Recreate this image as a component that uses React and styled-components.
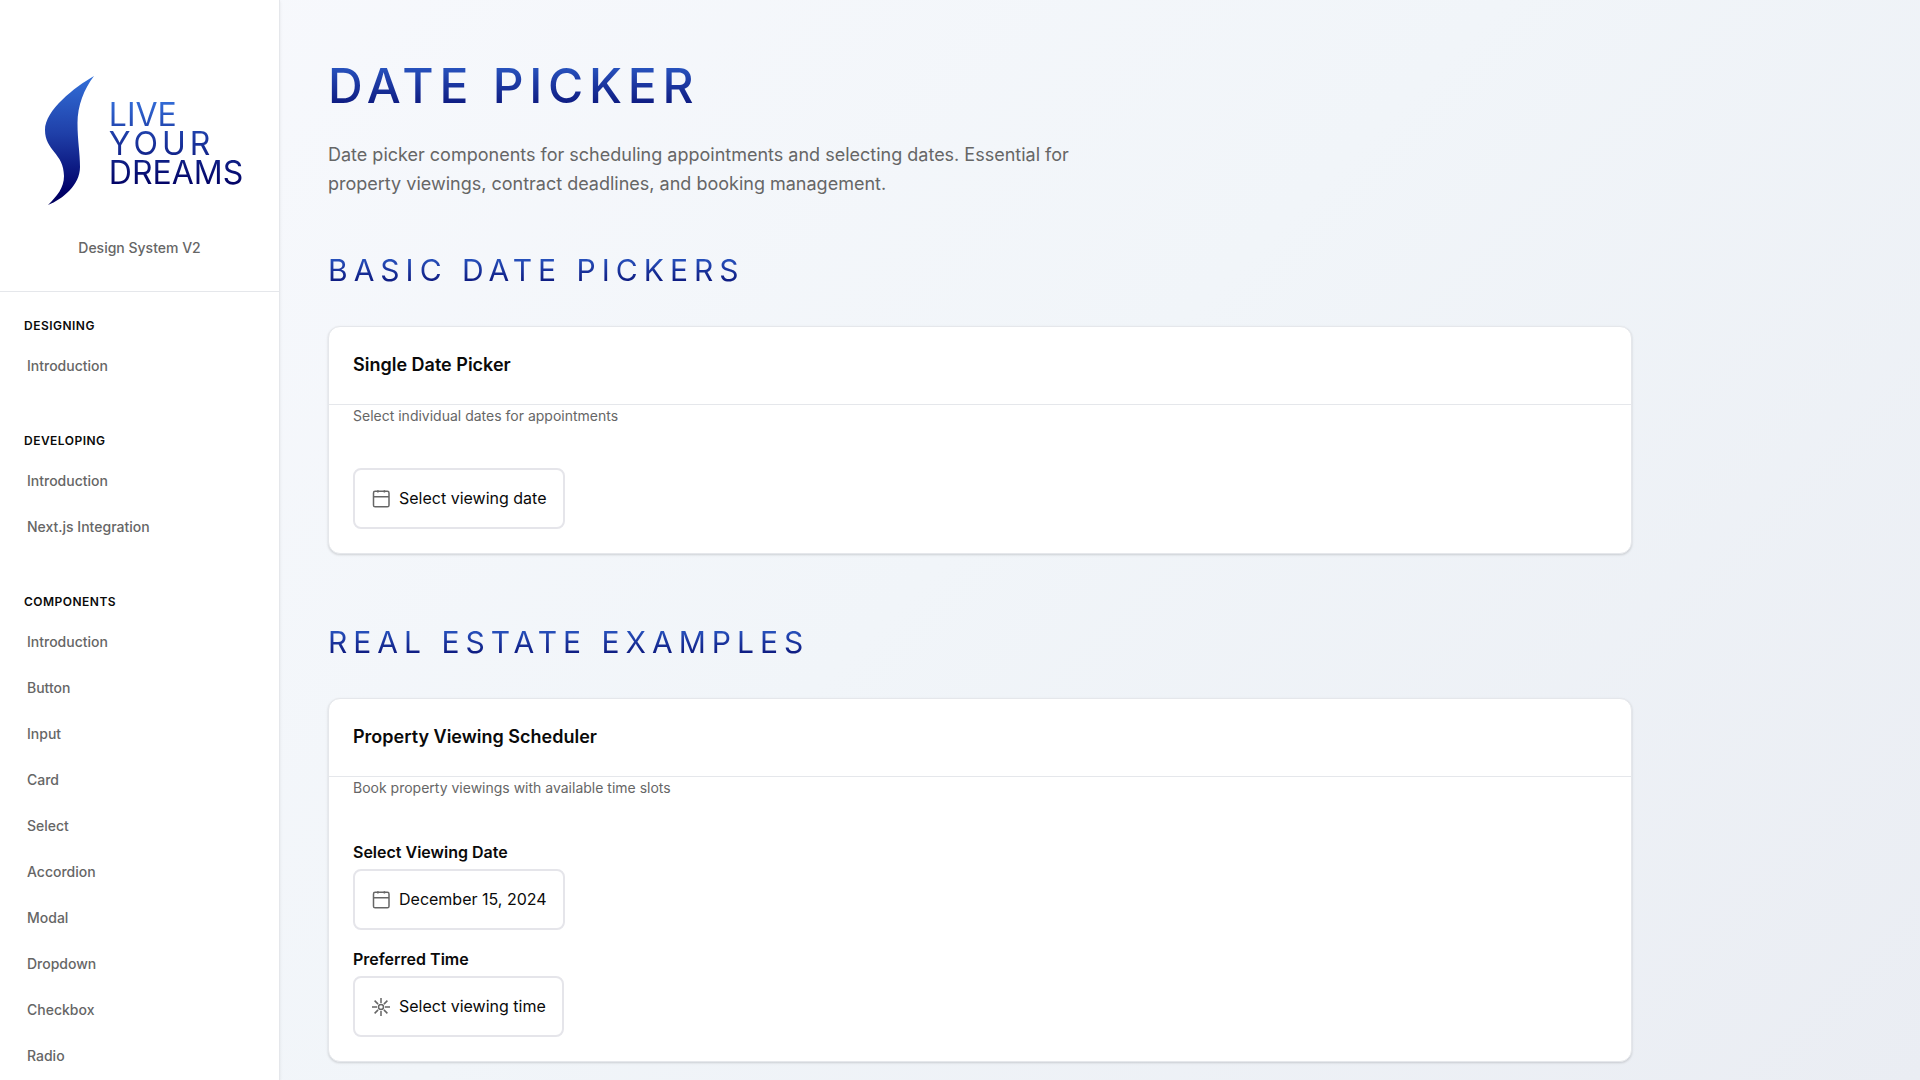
import React from "react";
import styled, { createGlobalStyle } from "styled-components";

const GlobalStyle = createGlobalStyle`
  *, *::before, *::after { box-sizing: border-box; }
  html { height: 100%; overflow: hidden; }
  body {
    margin: 0;
    height: 100%;
    font-family: Inter, "Liberation Sans", sans-serif;
    font-size: 16px;
    color: #0a0a0a;
    background: linear-gradient(135deg, #f8f9fd 0%, #f1f5f9 50%, #eaedf3 100%);
  }
  #root { height: 100%; }
  h1, h2, h3, p, ul { margin: 0; padding: 0; }
  ul { list-style: none; }
`;

const brandGradient = "linear-gradient(180deg, #3674e0 0%, #1d3aa4 45%, #000062 100%)";

const Layout = styled.div`
  display: flex;
  height: 100%;
`;

const Sidebar = styled.aside`
  flex: 0 0 280px;
  height: 100%;
  overflow: hidden;
  background: #ffffff;
  border-right: 1px solid #e5e7eb;
  box-shadow: 0 1px 3px rgba(0, 0, 0, 0.08);
`;

const SidebarHeader = styled.header`
  display: flex;
  flex-direction: column;
  align-items: center;
  gap: 32px;
  padding: 76px 24px 32px;
  border-bottom: 1px solid #e5e7eb;
`;

const Logo = styled.a`
  display: flex;
  align-items: center;
  gap: 15px;
  padding-left: 9px;
  text-decoration: none;
`;

const Flame = styled.svg`
  display: block;
  width: 49px;
  height: 129px;
`;

const Wordmark = styled.span`
  display: flex;
  flex-direction: column;
  padding-top: 5px;
  font-size: 32px;
  line-height: 29px;
  font-weight: 400;
  color: transparent;
  background: ${brandGradient};
  background-clip: text;
  -webkit-background-clip: text;
`;

const Word = styled.span`
  letter-spacing: ${(p) => (p.$wide ? "4px" : "normal")};
`;

const Version = styled.p`
  font-size: 14px;
  line-height: 22px;
  font-weight: 500;
  color: #666666;
`;

const Nav = styled.nav`
  display: flex;
  flex-direction: column;
  gap: 42px;
  padding: 24px 24px 0;
`;

const NavTitle = styled.h3`
  font-size: 12px;
  line-height: 19px;
  font-weight: 600;
  letter-spacing: 0.04em;
  text-transform: uppercase;
  margin-bottom: 8px;
`;

const NavLink = styled.a`
  display: block;
  padding: 12px 3px;
  font-size: 14px;
  line-height: 22px;
  font-weight: 500;
  color: #666666;
  text-decoration: none;
`;

const Main = styled.main`
  flex: 1;
  min-width: 0;
  max-width: 1400px;
  height: 100%;
  overflow: hidden;
  padding: 48px;
`;

const PageTitle = styled.h1`
  width: fit-content;
  font-size: 48px;
  line-height: 76px;
  font-weight: 500;
  letter-spacing: 0.12em;
  text-transform: uppercase;
  color: transparent;
  background: ${brandGradient};
  background-clip: text;
  -webkit-background-clip: text;
`;

const Lead = styled.p`
  max-width: 768px;
  margin-top: 16px;
  font-size: 18px;
  line-height: 29px;
  color: #666666;
`;

const Section = styled.section`
  margin-top: ${(p) => (p.$first ? "48px" : "64px")};
`;

const SectionTitle = styled.h2`
  width: fit-content;
  margin-bottom: 32px;
  font-size: 30px;
  line-height: 48px;
  font-weight: 400;
  letter-spacing: 0.2em;
  text-transform: uppercase;
  color: transparent;
  background: ${brandGradient};
  background-clip: text;
  -webkit-background-clip: text;
`;

const Card = styled.article`
  background: #ffffff;
  border: 1px solid #e5e7eb;
  border-radius: 12px;
  box-shadow: 0 1px 3px rgba(0, 0, 0, 0.1), 0 1px 2px rgba(0, 0, 0, 0.06);
`;

const CardHeader = styled.header`
  padding: 24px 24px 26px;
  border-bottom: 1px solid #e5e7eb;
`;

const CardTitle = styled.h3`
  font-size: 18px;
  line-height: 27px;
  font-weight: 600;
`;

const CardText = styled.p`
  padding: 0 24px;
  font-size: 14px;
  line-height: 22px;
  color: #666666;
`;

const CardBody = styled.div`
  display: flex;
  flex-direction: column;
  gap: 17px;
  padding: 41px 24px 24px;
`;

const Field = styled.div`
  display: flex;
  flex-direction: column;
  align-items: flex-start;
  gap: 4px;
`;

const Label = styled.label`
  font-size: 16px;
  line-height: 25px;
  font-weight: 600;
`;

const PickerButton = styled.button`
  display: flex;
  align-items: center;
  gap: 8px;
  padding: 16px;
  border: 2px solid #e5e5ea;
  border-radius: 8px;
  background: #ffffff;
  color: #0a0a0a;
  font-family: inherit;
  font-size: 16px;
  line-height: 25px;
  cursor: pointer;
`;

const Glyph = styled.svg`
  width: 20px;
  height: 20px;
  fill: none;
  stroke: #666666;
  stroke-width: 1.5;
`;

const CalendarIcon = () => (
  <Glyph viewBox="0 0 20 20" aria-hidden="true">
    <rect x="2.5" y="2.3" width="15.5" height="15.5" rx="1.6" />
    <path d="M2.5 7.700h15.5M6.9 1.300v2.300M13.4 1.300v2.300" />
  </Glyph>
);

const SparkIcon = () => (
  <Glyph viewBox="0 0 20 20" aria-hidden="true">
    <circle cx="10" cy="10" r="2.5" />
    <path d="M10 1v5M10 14v5M1 10h5M14 10h5M3.6 3.6l3.5 3.5M12.9 12.9l3.5 3.5M3.6 16.4l3.5-3.5M12.9 7.1l3.5-3.5" />
  </Glyph>
);

const navigation = [
  { title: "Designing", items: ["Introduction"] },
  { title: "Developing", items: ["Introduction", "Next.js Integration"] },
  {
    title: "Components",
    items: [
      "Introduction", "Button", "Input", "Card", "Select",
      "Accordion", "Modal", "Dropdown", "Checkbox", "Radio",
    ],
  },
];

export default function App() {
  return (
    <>
      <GlobalStyle />
      <Layout>
        <Sidebar>
          <SidebarHeader>
            <Logo href="#home">
              <Flame viewBox="0 0 49 129" aria-hidden="true">
                <defs>
                  <linearGradient id="flame" x1="0" y1="0" x2="0" y2="1">
                    <stop offset="0" stopColor="#326fd8" />
                    <stop offset="0.45" stopColor="#1f3fa8" />
                    <stop offset="0.9" stopColor="#000068" />
                    <stop offset="1" stopColor="#00005c" />
                  </linearGradient>
                </defs>
                <path
                  fill="url(#flame)"
                  d="M49 0C30 11 0 34 0 54C0 75 19 77 19 100C19 112 12 120 3 129C18 123 35 109 35 91C35 76 32.500 65 32.500 47C32.500 30 39 13 49 0Z"
                />
              </Flame>
              <Wordmark>
                <Word>LIVE</Word>
                <Word $wide>YOUR</Word>
                <Word>DREAMS</Word>
              </Wordmark>
            </Logo>
            <Version>Design System V2</Version>
          </SidebarHeader>
          <Nav>
            {navigation.map((group) => (
              <div key={group.title}>
                <NavTitle>{group.title}</NavTitle>
                <ul>
                  {group.items.map((item) => (
                    <li key={item}>
                      <NavLink href="#">{item}</NavLink>
                    </li>
                  ))}
                </ul>
              </div>
            ))}
          </Nav>
        </Sidebar>

        <Main>
          <PageTitle>Date Picker</PageTitle>
          <Lead>
            Date picker components for scheduling appointments and selecting dates.
            Essential for property viewings, contract deadlines, and booking management.
          </Lead>

          <Section $first>
            <SectionTitle>Basic Date Pickers</SectionTitle>
            <Card>
              <CardHeader>
                <CardTitle>Single Date Picker</CardTitle>
              </CardHeader>
              <CardText>Select individual dates for appointments</CardText>
              <CardBody>
                <Field>
                  <PickerButton type="button">
                    <CalendarIcon />
                    Select viewing date
                  </PickerButton>
                </Field>
              </CardBody>
            </Card>
          </Section>

          <Section>
            <SectionTitle>Real Estate Examples</SectionTitle>
            <Card>
              <CardHeader>
                <CardTitle>Property Viewing Scheduler</CardTitle>
              </CardHeader>
              <CardText>Book property viewings with available time slots</CardText>
              <CardBody>
                <Field>
                  <Label htmlFor="viewing-date">Select Viewing Date</Label>
                  <PickerButton type="button" id="viewing-date">
                    <CalendarIcon />
                    December 15, 2024
                  </PickerButton>
                </Field>
                <Field>
                  <Label htmlFor="viewing-time">Preferred Time</Label>
                  <PickerButton type="button" id="viewing-time">
                    <SparkIcon />
                    Select viewing time
                  </PickerButton>
                </Field>
              </CardBody>
            </Card>
          </Section>
        </Main>
      </Layout>
    </>
  );
}
